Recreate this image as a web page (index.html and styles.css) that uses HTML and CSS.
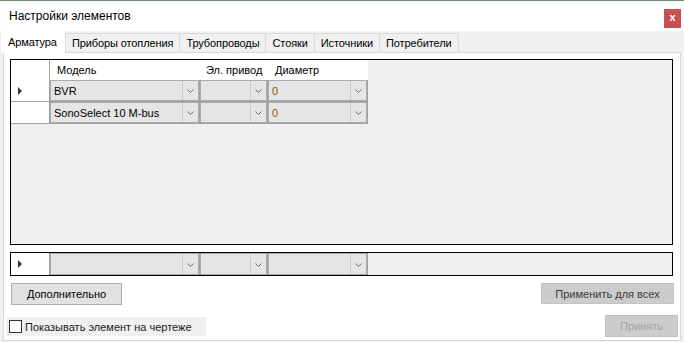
FILE: index.html
```html
<!DOCTYPE html>
<html lang="ru">

<head>
    <meta charset="UTF-8">
    <title>Настройки элементов</title>
    <link rel="stylesheet" href="styles.css">
</head>

<body>
    <div class="window">
        <div class="titlebar">
            <span class="title">Настройки элементов</span>
            <button class="close">x</button>
        </div>

        <div class="tabs">
            <div class="tab active">Арматура</div>
            <div class="tab">Приборы отопления</div>
            <div class="tab">Трубопроводы</div>
            <div class="tab">Стояки</div>
            <div class="tab">Источники</div>
            <div class="tab">Потребители</div>
        </div>

        <div class="page">
            <div class="grid main-grid">
                <div class="row head">
                    <div class="rh"></div>
                    <div class="hc c-model">Модель</div>
                    <div class="hc c-drive">Эл. привод</div>
                    <div class="hc c-diam">Диаметр</div>
                </div>
                <div class="row">
                    <div class="rh"><span class="arrow"></span></div>
                    <div class="cell c-model">
                        <div class="combo"><span class="val">BVR</span><span class="drop"><svg width="7" height="4" viewBox="0 0 7 4"><polyline points="0.5,0.5 3.5,3.5 6.5,0.5" /></svg></span></div>
                    </div>
                    <div class="cell c-drive">
                        <div class="combo"><span class="val"></span><span class="drop"><svg width="7" height="4" viewBox="0 0 7 4"><polyline points="0.5,0.5 3.5,3.5 6.5,0.5" /></svg></span></div>
                    </div>
                    <div class="cell c-diam">
                        <div class="combo"><span class="val num">0</span><span class="drop"><svg width="7" height="4" viewBox="0 0 7 4"><polyline points="0.5,0.5 3.5,3.5 6.5,0.5" /></svg></span></div>
                    </div>
                </div>
                <div class="row">
                    <div class="rh"></div>
                    <div class="cell c-model">
                        <div class="combo"><span class="val">SonoSelect 10 M-bus</span><span class="drop"><svg width="7" height="4" viewBox="0 0 7 4"><polyline points="0.5,0.5 3.5,3.5 6.5,0.5" /></svg></span></div>
                    </div>
                    <div class="cell c-drive">
                        <div class="combo"><span class="val"></span><span class="drop"><svg width="7" height="4" viewBox="0 0 7 4"><polyline points="0.5,0.5 3.5,3.5 6.5,0.5" /></svg></span></div>
                    </div>
                    <div class="cell c-diam">
                        <div class="combo"><span class="val num">0</span><span class="drop"><svg width="7" height="4" viewBox="0 0 7 4"><polyline points="0.5,0.5 3.5,3.5 6.5,0.5" /></svg></span></div>
                    </div>
                </div>
            </div>

            <div class="grid new-grid">
                <div class="row">
                    <div class="rh"><span class="arrow"></span></div>
                    <div class="cell c-model">
                        <div class="combo"><span class="val"></span><span class="drop"><svg width="7" height="4" viewBox="0 0 7 4"><polyline points="0.5,0.5 3.5,3.5 6.5,0.5" /></svg></span></div>
                    </div>
                    <div class="cell c-drive">
                        <div class="combo"><span class="val"></span><span class="drop"><svg width="7" height="4" viewBox="0 0 7 4"><polyline points="0.5,0.5 3.5,3.5 6.5,0.5" /></svg></span></div>
                    </div>
                    <div class="cell c-diam">
                        <div class="combo"><span class="val"></span><span class="drop"><svg width="7" height="4" viewBox="0 0 7 4"><polyline points="0.5,0.5 3.5,3.5 6.5,0.5" /></svg></span></div>
                    </div>
                </div>
            </div>

            <div class="actions">
                <button class="btn">Дополнительно</button>
                <button class="btn btn-flat">Применить для всех</button>
            </div>

            <div class="footer">
                <label class="check">
                    <span class="box"></span>
                    Показывать элемент на чертеже
                </label>
                <button class="btn btn-off">Принять</button>
            </div>
        </div>
    </div>
</body>

</html>
```

FILE: styles.css
```css
* {
    box-sizing: border-box;
}

body {
    margin: 0;
    background: #f0f0f0;
    font-family: "Liberation Sans", Arial, sans-serif;
    font-size: 11px;
    color: #000;
}

button {
    font-family: inherit;
    font-size: inherit;
}

.window {
    width: 684px;
    height: 342px;
    border-top: 1px solid #6f8a6f;
    background: #f0f0f0;
    overflow: hidden;
}

/* Title bar */

.titlebar {
    height: 30px;
    background: #fff;
    display: flex;
    align-items: center;
    padding-left: 9px;
}

.title {
    font-size: 12px;
}

.close {
    margin-left: auto;
    margin-right: 3px;
    margin-top: 5px;
    width: 17px;
    height: 19px;
    padding: 0 0 2px;
    border: none;
    background: #c75050;
    color: #fff;
    font-weight: bold;
    font-size: 11px;
    line-height: 17px;
}

/* Tabs */

.tabs {
    height: 21px;
    display: flex;
    align-items: flex-end;
    padding-left: 1px;
}

.tab {
    height: 19px;
    padding: 3px 6px 0;
    background: #f0f0f0;
    border: 1px solid #d9d9d9;
    border-bottom: none;
    margin-left: -1px;
    white-space: nowrap;
    letter-spacing: -0.1px;
}

.tab:nth-child(2) {
    margin-left: 0;
}

.tab.active {
    height: 22px;
    margin-left: 0;
    margin-bottom: -1px;
    padding: 4px 7px 0 6px;
    background: #fff;
    border-color: #fff;
    position: relative;
    z-index: 1;
}

/* Tab page */

.page {
    margin: 0 3px;
    height: 289px;
    background: #fff;
    border: 1px solid #d9d9d9;
    padding: 6px 7px 0 6px;
}

.grid {
    border: 1px solid #000;
    background: #f0f0f0;
}

.main-grid {
    height: 186px;
}

.new-grid {
    margin-top: 7px;
    height: 24px;
}

.row {
    display: flex;
    height: 22px;
}

.row.head {
    height: 20px;
}

.rh {
    width: 39px;
    background: #fff;
    border-right: 1px solid #a0a0a0;
    border-bottom: 1px solid #a0a0a0;
    display: flex;
    align-items: center;
    padding-left: 7px;
}

.head .rh {
    border-bottom: none;
}

.new-grid .rh {
    border-bottom: none;
}

.arrow {
    width: 0;
    height: 0;
    border-top: 4px solid transparent;
    border-bottom: 4px solid transparent;
    border-left: 4px solid #333;
}

.c-model {
    width: 150px;
}

.c-drive {
    width: 68px;
}

.c-diam {
    width: 100px;
}

.hc {
    background: #fff;
    padding: 4px 0 0 7px;
    white-space: nowrap;
}

.hc.c-drive {
    padding-left: 6px;
}

.cell {
    border-right: 1px solid #a0a0a0;
    border-bottom: 1px solid #a0a0a0;
}

.new-grid .cell {
    border-bottom: none;
}

.combo {
    height: 100%;
    display: flex;
    border: 1px solid #ababab;
    background: #e5e5e5;
}

.val {
    flex: 1;
    padding: 4px 0 0 3px;
    white-space: nowrap;
    overflow: hidden;
}

.val.num {
    color: #9c5200;
}

.drop {
    width: 16px;
    border-left: 1px solid #cacaca;
    display: flex;
    align-items: center;
    justify-content: center;
    padding-top: 1px;
}

.drop svg {
    fill: none;
    stroke: #6a6a6a;
    stroke-width: 1;
}

/* Buttons */

.actions {
    display: flex;
    justify-content: space-between;
    align-items: flex-start;
    margin-top: 7px;
    padding-left: 1px;
}

.btn {
    height: 22px;
    padding: 0 10px;
    background: #e1e1e1;
    border: 1px solid #adadad;
    color: #000;
    width: 111px;
}

.btn-flat {
    width: 133px;
    height: 21px;
    background: #cccccc;
    border-color: #c4c4c4;
    color: #3a3a3a;
    margin-right: -1px;
}

.footer {
    display: flex;
    justify-content: space-between;
    align-items: flex-end;
    margin-top: 10px;
    margin-left: -4px;
    margin-right: -5px;
}

.check {
    display: flex;
    align-items: center;
    gap: 3px;
    width: 200px;
    height: 19px;
    background: #f0f0f0;
    padding-left: 3px;
    color: #1a1a1a;
    margin-bottom: 1px;
}

.box {
    width: 13px;
    height: 13px;
    border: 1px solid #333;
    background: #fff;
}

.btn-off {
    width: 73px;
    height: 22px;
    background: #cccccc;
    border-color: #bfbfbf;
    color: #a2a2a2;
}
```
